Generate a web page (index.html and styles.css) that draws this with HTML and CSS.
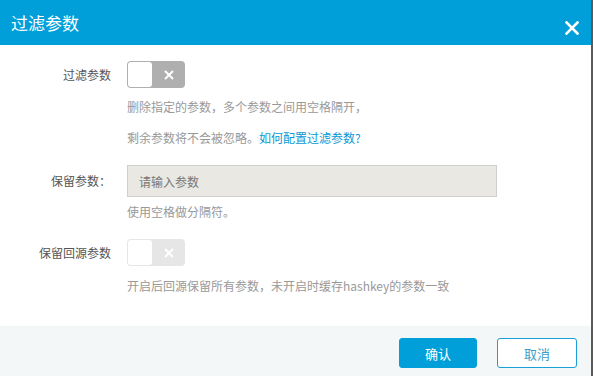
FILE: index.html
```html
<!DOCTYPE html>
<html lang="zh-CN">
<head>
  <meta charset="UTF-8" />
  <title>过滤参数</title>
  <link rel="stylesheet" href="styles.css">
</head>
<body>
  <div class="dialog">
    <div class="dialog-head">
      <h2>过滤参数</h2>
      <button class="close-btn" aria-label="关闭">
        <svg width="14" height="14" viewBox="0 0 14 14"><path d="M1.5 1.5 L12.5 12.5 M12.5 1.5 L1.5 12.5" stroke="#fff" stroke-width="2.6" stroke-linecap="square"/></svg>
      </button>
    </div>

    <div class="dialog-body">
      <div class="row">
        <label class="label">过滤参数</label>
        <div class="field">
          <span class="switch">
            <span class="knob"></span>
            <svg class="switch-x" width="10" height="10" viewBox="0 0 10 10"><path d="M1 1 L9 9 M9 1 L1 9" stroke="#fff" stroke-width="2"/></svg>
          </span>
        </div>
      </div>
      <p class="tip first">删除指定的参数，多个参数之间用空格隔开，</p>
      <p class="tip second">剩余参数将不会被忽略。<a href="#">如何配置过滤参数?</a></p>

      <div class="row input-row">
        <label class="label">保留参数：</label>
        <div class="field">
          <input type="text" class="text-input" placeholder="请输入参数" disabled>
        </div>
      </div>
      <p class="tip under-input">使用空格做分隔符。</p>

      <div class="row switch-row">
        <label class="label">保留回源参数</label>
        <div class="field">
          <span class="switch disabled">
            <span class="knob"></span>
            <svg class="switch-x" width="10" height="10" viewBox="0 0 10 10"><path d="M1 1 L9 9 M9 1 L1 9" stroke="#fff" stroke-width="2"/></svg>
          </span>
        </div>
      </div>
      <p class="tip under-switch">开启后回源保留所有参数，未开启时缓存hashkey的参数一致</p>
    </div>

    <div class="dialog-foot">
      <button class="btn btn-primary">确认</button>
      <button class="btn btn-default">取消</button>
    </div>
  </div>
</body>
</html>
```

FILE: styles.css
```css
* {
  margin: 0;
  padding: 0;
  box-sizing: border-box;
}

body {
  font-family: "Noto Sans CJK SC", "Noto Sans", sans-serif;
  font-size: 12px;
  background: #fff;
  width: 593px;
  height: 376px;
  overflow: hidden;
}

.dialog {
  width: 593px;
  height: 376px;
  border-right: 2px solid #5a5a5a;
  display: flex;
  flex-direction: column;
  background: #fff;
}

.dialog-head {
  height: 45px;
  background: #009fda;
  display: flex;
  align-items: center;
  justify-content: space-between;
  padding: 0 12px 0 11px;
}

.dialog-head h2 {
  color: #fff;
  font-size: 17px;
  font-weight: normal;
  line-height: 1;
  margin-top: -1px;
}

.close-btn {
  background: none;
  border: none;
  width: 14px;
  height: 14px;
  margin-top: 11px;
  display: flex;
  cursor: pointer;
}

.dialog-body {
  flex: 1;
  padding-top: 16px;
}

.row {
  display: flex;
  align-items: center;
}

.label {
  width: 111px;
  text-align: right;
  color: #555;
  font-size: 12px;
  line-height: 18px;
}

.field {
  margin-left: 16px;
}

.switch {
  position: relative;
  display: block;
  width: 58px;
  height: 27px;
  border-radius: 4px;
  background: #afafaf;
}

.switch.disabled {
  background: #e6e6e6;
}

.knob {
  position: absolute;
  left: 1px;
  top: 1px;
  width: 24px;
  height: 25px;
  border-radius: 3px;
  background: #fff;
}

.switch-x {
  position: absolute;
  left: 37px;
  top: 9px;
}

.tip {
  margin-left: 127px;
  color: #999;
  font-size: 12px;
  line-height: 18px;
}

.tip a {
  color: #0a98d4;
  text-decoration: none;
}

.tip.first {
  margin-top: 10px;
}

.tip.second {
  margin-top: 13px;
}

.input-row {
  margin-top: 18px;
}

.text-input {
  width: 370px;
  height: 32px;
  border: 1px solid #cfcfcc;
  background: #e9e8e2;
  padding: 0 11px;
  font-family: inherit;
  font-size: 12px;
  outline: none;
}

.text-input::placeholder {
  color: #777;
}

.tip.under-input {
  margin-top: 6px;
}

.switch-row {
  margin-top: 18px;
}

.tip.under-switch {
  margin-top: 11px;
}

.dialog-foot {
  height: 50px;
  background: #f4f7f8;
  display: flex;
  justify-content: flex-end;
  align-items: flex-start;
  gap: 20px;
  padding: 12px 14px 0 0;
}

.btn {
  width: 79px;
  height: 30px;
  border-radius: 3px;
  font-family: inherit;
  font-size: 13px;
  cursor: pointer;
}

.btn-primary {
  background: #009fda;
  border: 1px solid #009fda;
  color: #fff;
  width: 78px;
}

.btn-default {
  background: #fff;
  border: 1px solid #1a9fd6;
  color: #3c9ec6;
  width: 80px;
}
```
